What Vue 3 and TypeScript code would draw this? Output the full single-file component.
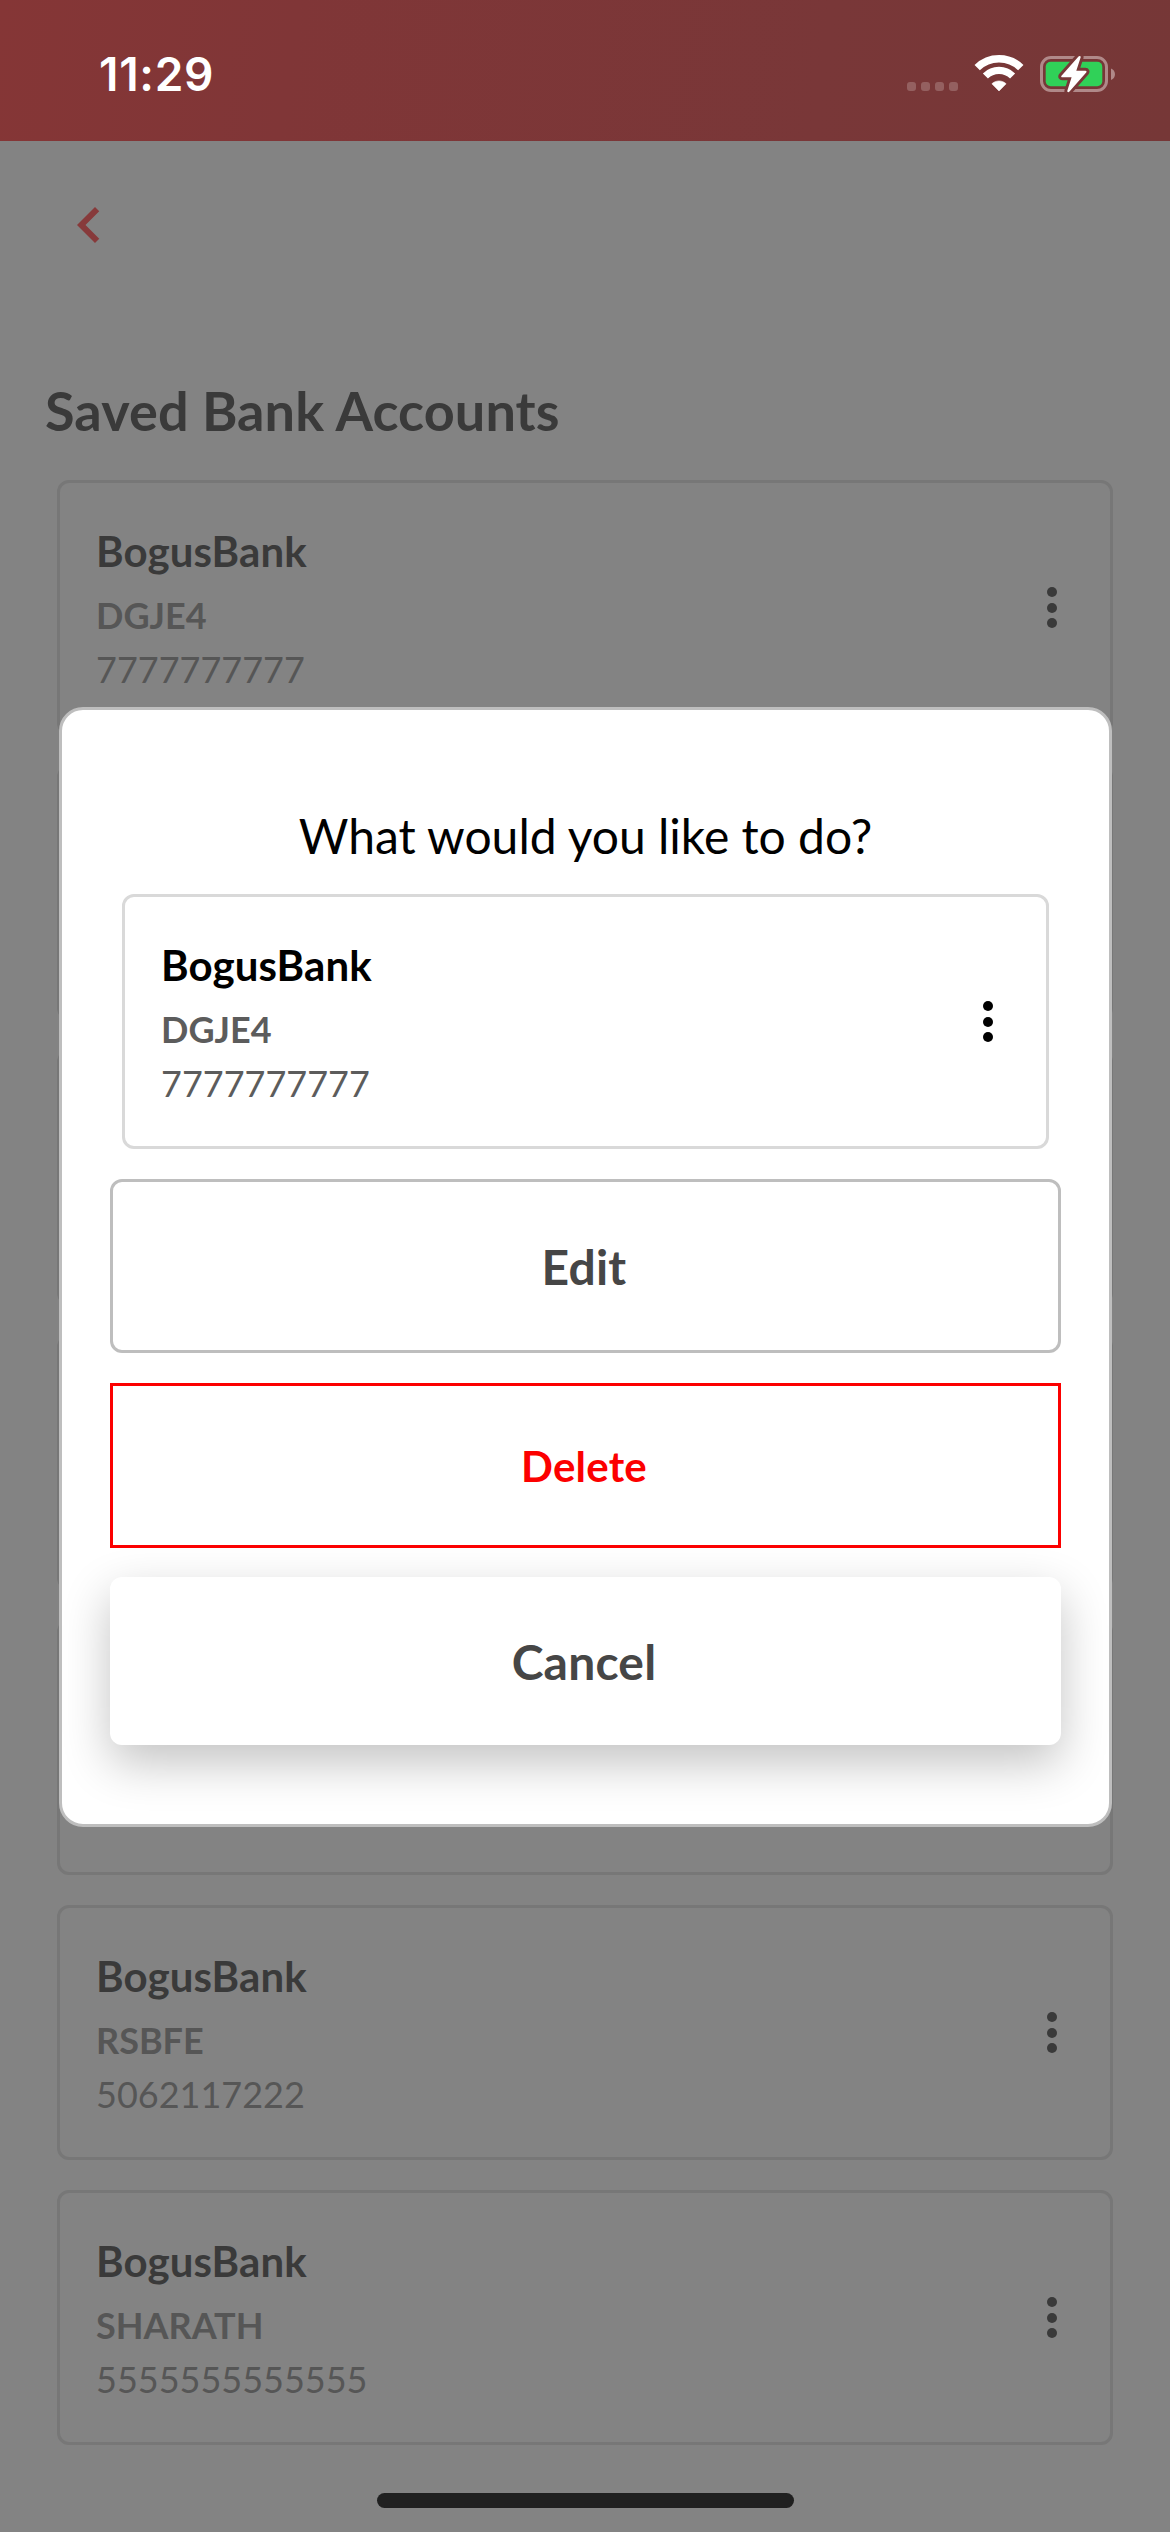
<script setup lang="ts">
interface Account {
  bank: string
  code: string
  number: string
}

const selected: Account = { bank: 'BogusBank', code: 'DGJE4', number: '7777777777' }

// The rows between the first and the last two stay behind the dialog.
const covered: Account = { bank: '', code: '', number: '' }
const accounts: Account[] = [
  selected,
  covered,
  covered,
  covered,
  covered,
  { bank: 'BogusBank', code: 'RSBFE', number: '5062117222' },
  { bank: 'BogusBank', code: 'SHARATH', number: '5555555555555' },
]
</script>

<template>
  <div class="screen">
    <header class="status">
      <span class="time">11:29</span>
      <div class="indicators">
        <div class="signal"><i v-for="n in 4" :key="n"></i></div>
        <svg class="wifi" width="50" height="38" viewBox="0 0 50 38">
          <g fill="none" stroke="#fff">
            <path d="M3.2 13.6A31.2 31.2 0 0 1 46.8 13.6" stroke-width="7.6" />
            <path d="M11.4 22A19.4 19.4 0 0 1 38.6 22" stroke-width="7.2" />
          </g>
          <path d="M25 37L17.9 29.8C21.8 26 28.2 26 32.1 29.8Z" fill="#fff" stroke="#fff" stroke-width=".6" stroke-linejoin="round" />
        </svg>
        <svg class="battery" width="78" height="42" viewBox="0 0 78 42">
          <rect x="1.5" y="4.5" width="65" height="33" rx="9.5" fill="none" stroke="#b08989" stroke-width="3" />
          <path d="M71 15.5C76.3 17.500 76.3 25 71 27Z" fill="#b08989" />
          <rect x="5.7" y="8.7" width="56.6" height="24.6" rx="5" fill="#30d158" />
          <path d="M38.5 3.500L21.5 22.7C20.8 23.5 21.3 24.3 22.3 24.3H31.6L27.400 37.500C26.9 39.200 28.5 39.700 29.5 38.400L46.2 19.5C46.9 18.600 46.500 17.7 45.400 17.7H36.300L40.600 4.500C41 2.900 39.500 2.400 38.500 3.500Z" fill="#fff" stroke="#783838" stroke-width="5.8" stroke-linejoin="round" paint-order="stroke" />
        </svg>
      </div>
    </header>

    <nav class="nav">
      <svg width="72" height="72" viewBox="0 0 24 24">
        <path d="M15.41 7.41L14 6l-6 6 6 6 1.41-1.41L10.83 12z" fill="#873a3b" />
      </svg>
    </nav>

    <h1 class="title">Saved Bank Accounts</h1>

    <main class="list">
      <article v-for="(a, i) in accounts" :key="i" class="card">
        <div class="info">
          <p class="bank">{{ a.bank }}</p>
          <p class="code">{{ a.code }}</p>
          <p class="number">{{ a.number }}</p>
        </div>
        <div class="dots"><i v-for="n in 3" :key="n"></i></div>
      </article>
    </main>

    <div class="home"></div>

    <div class="overlay">
      <section class="dialog">
        <h2 class="question">What would you like to do?</h2>
        <article class="card active">
          <div class="info">
            <p class="bank">{{ selected.bank }}</p>
            <p class="code">{{ selected.code }}</p>
            <p class="number">{{ selected.number }}</p>
          </div>
          <div class="dots"><i v-for="n in 3" :key="n"></i></div>
        </article>
        <button class="btn edit">Edit</button>
        <button class="btn delete">Delete</button>
        <button class="btn cancel">Cancel</button>
      </section>
    </div>
  </div>
</template>

<style>
body {
  background: #838383;
}
</style>

<style scoped>
.screen {
  position: relative;
  display: flex;
  flex-direction: column;
  width: 1170px;
  height: 2532px;
  overflow: hidden;
  background: #838383;
  font-family: Lato, sans-serif;
}

.status {
  flex: none;
  display: flex;
  justify-content: space-between;
  box-sizing: border-box;
  height: 141px;
  padding: 47px 52px 0 99px;
  background: linear-gradient(98deg, #853636 0%, #803637 25%, #793738 70%, #763737 100%);
}

.time {
  margin-top: -1px;
  color: #fff;
  font: 600 46px/56px Inter, sans-serif;
  letter-spacing: 0.7px;
}

.indicators {
  display: flex;
  align-items: flex-start;
}

.signal {
  display: flex;
  gap: 4.6px;
  margin: 34.7px 16px 0 0;
}

.signal i {
  width: 9.4px;
  height: 9.4px;
  border-radius: 3px;
  background: #946060;
}

.wifi {
  margin: 7px 16px 0 0;
}

.battery {
  margin-top: 6px;
}

.nav {
  flex: none;
  height: 195px;
  padding: 48px 0 0 53px;
  box-sizing: border-box;
}

.nav svg {
  display: block;
}

.title {
  flex: none;
  margin: 42px 0 0 45px;
  height: 102px;
  color: #3a3a3a;
  font-size: 54px;
  font-weight: 700;
  line-height: 65px;
  letter-spacing: 0.1px;
}

.list {
  flex: none;
  display: flex;
  flex-direction: column;
  gap: 30px;
  padding: 0 57px;
}

.card {
  display: flex;
  justify-content: space-between;
  align-items: center;
  box-sizing: border-box;
  height: 255px;
  padding: 0 53.5px 0 36px;
  border: 3px solid #777;
  border-radius: 12px;
  color: #3a3a3a;
}

.info {
  align-self: flex-start;
  padding-top: 43px;
}

.info p {
  margin: 0;
}

.bank {
  height: 50px;
  font-size: 42px;
  font-weight: 700;
  line-height: 50px;
  letter-spacing: 0.1px;
}

.info .code {
  height: 43px;
  margin-top: 18px;
  color: #565656;
  font-size: 36px;
  font-weight: 700;
  line-height: 43px;
}

.info .number {
  margin-top: 11px;
  color: #565656;
  font-size: 36px;
  line-height: 43px;
}

.dots {
  display: flex;
  flex-direction: column;
  gap: 5.8px;
}

.dots i {
  width: 10px;
  height: 10px;
  border-radius: 50%;
  background: currentColor;
}

.home {
  width: 417px;
  height: 15px;
  margin: 48px 0 0 377px;
  border-radius: 8px;
  background: #202020;
}

.overlay {
  position: absolute;
  inset: 0;
  display: flex;
  align-items: center;
  justify-content: center;
  padding: 2px 0 0 1px;
}

.dialog {
  display: flex;
  flex-direction: column;
  align-items: center;
  box-sizing: border-box;
  width: 1053px;
  height: 1120px;
  padding-top: 97px;
  border: 3px solid #bebebe;
  border-radius: 24px;
  background: #fff;
  overflow: hidden;
}

.question {
  margin: 0 0 29px;
  color: #000;
  font-size: 48px;
  font-weight: 400;
  line-height: 58px;
}

.card.active {
  width: 927px;
  border-color: #d9d9d9;
  color: #000;
}

.active .code,
.active .number {
  color: #5c5c5c;
}

.btn {
  flex: none;
  box-sizing: border-box;
  width: 951px;
  padding: 1px 3px 0 0;
  background: #fff;
  color: #464646;
  font: 700 48px/58px Lato, sans-serif;
  letter-spacing: 0.2px;
}

.edit {
  height: 174px;
  margin-top: 30px;
  border: 3px solid #bebebe;
  border-radius: 12px;
}

.delete {
  height: 165px;
  margin-top: 30px;
  padding-top: 0;
  border: 3px solid #fc0000;
  color: #fc0000;
  font-size: 42px;
}

.cancel {
  height: 168px;
  margin-top: 29px;
  border: 0;
  border-radius: 12px;
  box-shadow: 0 18px 48px rgba(0, 0, 0, 0.24);
}
</style>
